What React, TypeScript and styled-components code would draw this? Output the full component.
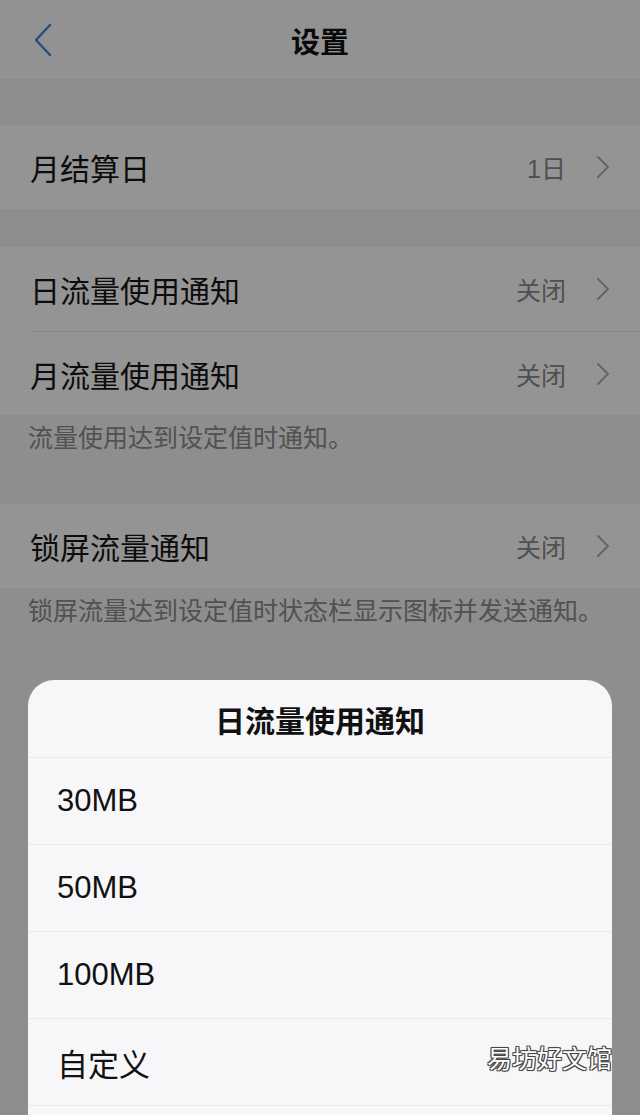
import React from "react";
import styled, { createGlobalStyle } from "styled-components";

const GlobalStyle = createGlobalStyle`
  html, body {
    margin: 0;
    padding: 0;
  }
  body {
    font-family: "Liberation Sans", "Noto Sans CJK SC", sans-serif;
    -webkit-font-smoothing: antialiased;
  }
`;

const Screen = styled.div`
  position: relative;
  width: 640px;
  height: 1115px;
  overflow: hidden;
  background: #f5f5f7;
`;

const NavBar = styled.header`
  display: grid;
  grid-template-columns: 90px 1fr 90px;
  align-items: center;
  height: 80px;
  background: #fbfbfb;
  border-bottom: 1px solid #eeeef0;
  box-sizing: border-box;
`;

const BackButton = styled.div`
  display: flex;
  align-items: center;
  padding-left: 33px;
  height: 100%;
  color: #3b86e8;
`;

const NavTitle = styled.h1`
  margin: 0;
  text-align: center;
  font-size: 29px;
  font-weight: 700;
  color: #111;
`;

const Group = styled.section<{ $gap: number }>`
  margin-top: ${(p) => p.$gap}px;
  background: #fff;
`;

const Row = styled.div`
  padding-left: 30px;
`;

const RowBody = styled.div<{ $divider?: boolean }>`
  display: flex;
  align-items: center;
  height: 84px;
  padding-right: 30px;
  box-sizing: border-box;
  border-top: ${(p) => (p.$divider ? "1px solid #ececee" : "none")};
`;

const Label = styled.span`
  flex: 1;
  font-size: 30px;
  color: #151515;
`;

const Value = styled.span`
  font-size: 25px;
  color: #8a8a8a;
  margin-right: 30px;
`;

const Note = styled.p<{ $bottom: number }>`
  margin: 0;
  padding: 8px 28px ${(p) => p.$bottom}px;
  font-size: 25px;
  line-height: 30px;
  color: #8c8c8c;
  white-space: nowrap;
`;

const Dim = styled.div`
  position: absolute;
  inset: 0;
  background: rgba(0, 0, 0, 0.42);
`;

const Sheet = styled.div`
  position: absolute;
  left: 28px;
  right: 28px;
  top: 680px;
  bottom: 0;
  background: #f7f7f9;
  border-radius: 26px 26px 0 0;
  overflow: hidden;
`;

const SheetTitle = styled.div`
  height: 77px;
  display: flex;
  align-items: center;
  justify-content: center;
  font-size: 30px;
  font-weight: 700;
  color: #111;
  border-bottom: 1px solid #e9e9ec;
`;

const Option = styled.div`
  height: 86px;
  display: flex;
  align-items: center;
  padding-left: 29px;
  border-bottom: 1px solid #e9e9ec;
  font-size: 31px;
  color: #111;
`;

const Watermark = styled.div`
  position: absolute;
  right: 28px;
  bottom: 40px;
  font-family: "Noto Sans CJK SC", sans-serif;
  font-size: 25px;
  color: #fff;
  text-shadow: -1px -1px 0 #444, 1px -1px 0 #444, -1px 1px 0 #444,
    1px 1px 0 #444, 0 0 2px #444;
`;

const Chevron = () => (
  <svg width="14" height="24" viewBox="0 0 14 24" fill="none">
    <path
      d="M2 2l10 10-10 10"
      stroke="#b0b0b4"
      strokeWidth="2"
      strokeLinecap="round"
      strokeLinejoin="round"
    />
  </svg>
);

const BackIcon = () => (
  <svg width="20" height="34" viewBox="0 0 20 34" fill="none">
    <path
      d="M17 2L3 17l14 15"
      stroke="currentColor"
      strokeWidth="2.4"
      strokeLinecap="round"
      strokeLinejoin="round"
    />
  </svg>
);

type Item = { label: string; value: string };

const SettingRow = ({ label, value, divider }: Item & { divider?: boolean }) => (
  <Row>
    <RowBody $divider={divider}>
      <Label>{label}</Label>
      <Value>{value}</Value>
      <Chevron />
    </RowBody>
  </Row>
);

const notifyRows: Item[] = [
  { label: "日流量使用通知", value: "关闭" },
  { label: "月流量使用通知", value: "关闭" },
];

const options = ["30MB", "50MB", "100MB", "自定义"];

export default function App() {
  return (
    <>
      <GlobalStyle />
      <Screen>
        <NavBar>
          <BackButton>
            <BackIcon />
          </BackButton>
          <NavTitle>设置</NavTitle>
          <div />
        </NavBar>

        <Group $gap={45}>
          <SettingRow label="月结算日" value="1日" />
        </Group>

        <Group $gap={38}>
          {notifyRows.map((r, i) => (
            <SettingRow key={r.label} {...r} divider={i > 0} />
          ))}
        </Group>
        <Note $bottom={51}>流量使用达到设定值时通知。</Note>

        <Group $gap={0}>
          <SettingRow label="锁屏流量通知" value="关闭" />
        </Group>
        <Note $bottom={0}>锁屏流量达到设定值时状态栏显示图标并发送通知。</Note>

        <Dim />

        <Sheet>
          <SheetTitle>日流量使用通知</SheetTitle>
          {options.map((o) => (
            <Option key={o}>{o}</Option>
          ))}
        </Sheet>

        <Watermark>易坊好文馆</Watermark>
      </Screen>
    </>
  );
}
